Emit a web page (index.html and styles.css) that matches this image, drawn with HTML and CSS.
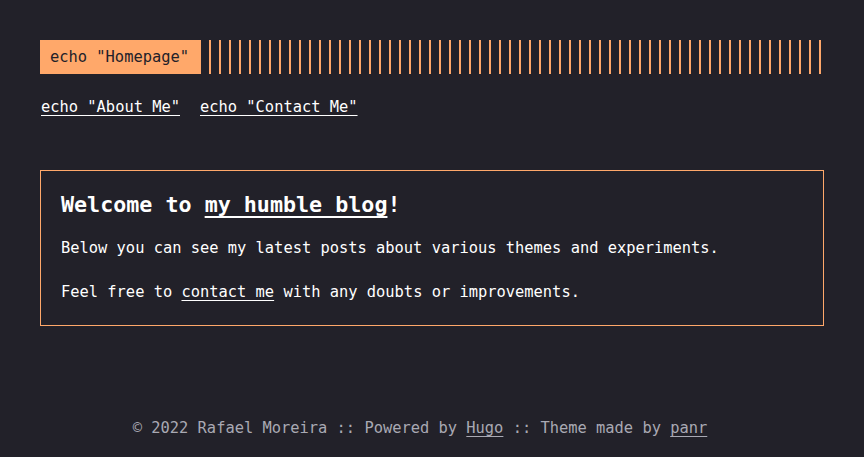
FILE: index.html
```html
<!DOCTYPE html>
<html lang="en">
<head>
<meta charset="utf-8">
<title>Homepage</title>
<link rel="stylesheet" href="styles.css">
</head>
<body>
<div class="container">
  <header class="header">
    <div class="header-inner">
      <a class="logo" href="#">echo "Homepage"</a>
      <div class="logo-bars"></div>
    </div>
    <nav class="menu">
      <a href="#">echo "About Me"</a>
      <a href="#">echo "Contact Me"</a>
    </nav>
  </header>
  <main class="content">
    <div class="framed">
      <h1 class="title">Welcome to <a href="#">my humble blog</a>!</h1>
      <p class="text">Below you can see my latest posts about various themes and experiments.</p>
      <p class="text">Feel free to <a href="#">contact me</a> with any doubts or improvements.</p>
    </div>
  </main>
  <footer class="footer">
    <span>© 2022 Rafael Moreira :: Powered by <a href="#">Hugo</a> :: Theme made by <a href="#">panr</a></span>
  </footer>
</div>
</body>
</html>
```
FILE: styles.css
```css
html, body {
  margin: 0;
  padding: 0;
}

body {
  background: #222129;
  color: #ffffff;
  font-family: "DejaVu Sans Mono", "Liberation Mono", monospace;
  font-size: 15.4px;
  line-height: 24px;
}

a {
  color: inherit;
}

.container {
  padding: 40px 40px 0;
  display: flex;
  flex-direction: column;
}

.header-inner {
  display: flex;
  align-items: stretch;
}

.logo {
  display: block;
  background: #ffa86a;
  color: #222129;
  text-decoration: none;
  padding: 5px 10px 5px 10px;
  line-height: 24px;
  width: 141px;
  flex: none;
}

.logo-bars {
  flex: 1;
  margin-left: 8px;
  margin-right: 3px;
  background: repeating-linear-gradient(90deg, #ffa86a 0, #ffa86a 2px, transparent 2px, transparent 10px);
}

.menu {
  display: flex;
  gap: 20px;
  margin-top: 21px;
  padding-left: 1px;
}

.menu a {
  text-decoration: underline;
  text-underline-offset: 3px;
}

.content {
  margin-top: 51px;
}

.framed {
  border: 1px solid #ffa86a;
  padding: 21px 20px 21px;
}

.title {
  margin: 0;
  font-size: 21.7px;
  line-height: 26px;
  font-weight: bold;
}

.title a {
  text-underline-offset: 4px;
}

.text {
  margin: 18px 0 0;
}

.text + .text {
  margin-top: 20px;
}

.text a {
  text-underline-offset: 3px;
}

.footer {
  margin-top: 90px;
  padding-right: 24px;
  text-align: center;
  color: #a9a9b3;
}

.footer a {
  text-underline-offset: 3px;
}
```
